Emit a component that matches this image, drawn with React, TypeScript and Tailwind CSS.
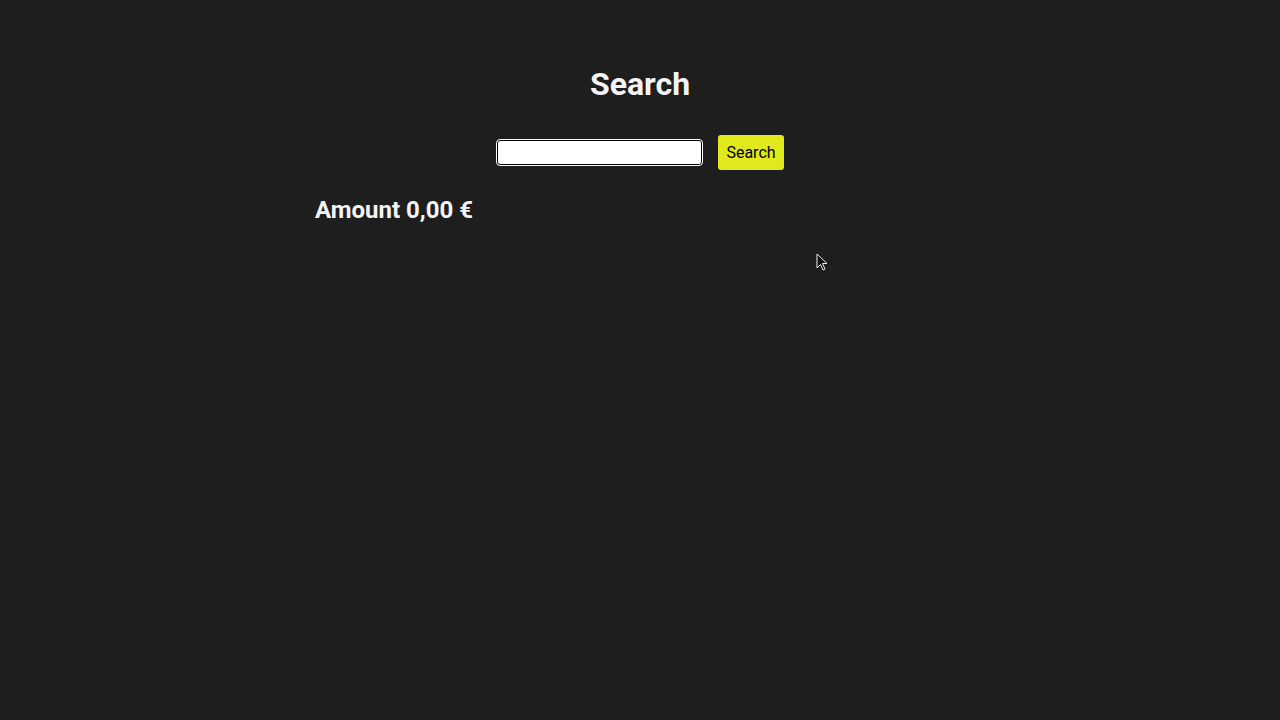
import React from "react";

export default function App() {
  return (
    <div
      className="relative min-h-[720px] w-full bg-[#1e1e1f] text-[#f4f4f6]"
      style={{ fontFamily: "Roboto, 'Liberation Sans', sans-serif" }}
    >
      <div className="mx-auto w-[650px] pt-[64px]">
        <h1 className="text-center text-[32px] font-bold leading-[40px]">Search</h1>
        <div className="mt-[31px] flex items-center justify-center gap-[16px] pl-[1px]">
          <input
            type="text"
            className="h-[25px] w-[205px] rounded-[3px] border border-black bg-white outline outline-1 outline-white"
          />
          <button className="h-[35px] rounded-[3px] bg-[#dfe91c] px-[8px] text-[16px] text-black">
            Search
          </button>
        </div>
        <div className="mt-[25px] text-[24px] font-bold leading-[30px]">Amount 0,00 €</div>
      </div>
      <svg
        className="absolute left-[816px] top-[253px]"
        width="14"
        height="20"
        viewBox="0 0 14 20"
      >
        <path
          d="M1 1 L1 15 L4.5 11.5 L7 17 L9 16 L6.5 10.5 L11 10.5 Z"
          fill="#111"
          stroke="#eee"
          strokeWidth="1"
        />
      </svg>
    </div>
  );
}
